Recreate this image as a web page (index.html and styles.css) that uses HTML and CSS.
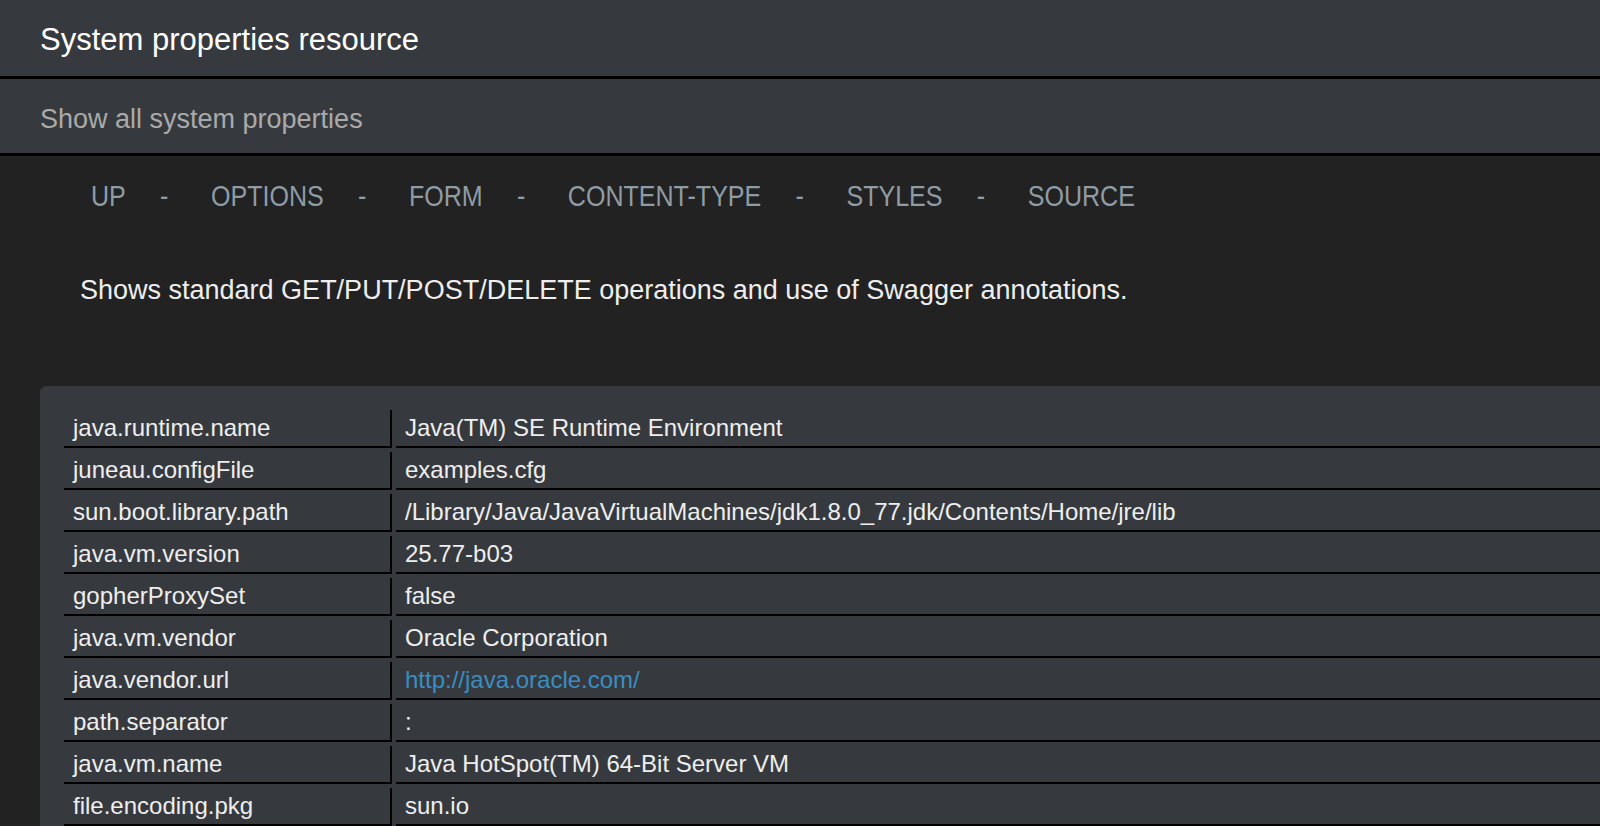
FILE: index.html
```html
<!DOCTYPE html>
<html>
<head>
<meta charset="utf-8">
<title>System properties resource</title>
<link rel="stylesheet" href="styles.css">
</head>
<body>
<header class="title-bar">
  <h1 class="title">System properties resource</h1>
</header>
<header class="subtitle-bar">
  <h2 class="subtitle">Show all system properties</h2>
</header>
<nav class="nav">
  <a class="nav-link" href="#">UP</a><span class="nav-sep">-</span>
  <a class="nav-link" href="#">OPTIONS</a><span class="nav-sep">-</span>
  <a class="nav-link" href="#">FORM</a><span class="nav-sep">-</span>
  <a class="nav-link" href="#">CONTENT-TYPE</a><span class="nav-sep">-</span>
  <a class="nav-link" href="#">STYLES</a><span class="nav-sep">-</span>
  <a class="nav-link" href="#">SOURCE</a>
</nav>
<p class="description">Shows standard GET/PUT/POST/DELETE operations and use of Swagger annotations.</p>
<section class="data-box">
  <table class="props">
    <tbody>
      <tr><td class="key">java.runtime.name</td><td class="val">Java(TM) SE Runtime Environment</td></tr>
      <tr><td class="key">juneau.configFile</td><td class="val">examples.cfg</td></tr>
      <tr><td class="key">sun.boot.library.path</td><td class="val">/Library/Java/JavaVirtualMachines/jdk1.8.0_77.jdk/Contents/Home/jre/lib</td></tr>
      <tr><td class="key">java.vm.version</td><td class="val">25.77-b03</td></tr>
      <tr><td class="key">gopherProxySet</td><td class="val">false</td></tr>
      <tr><td class="key">java.vm.vendor</td><td class="val">Oracle Corporation</td></tr>
      <tr><td class="key">java.vendor.url</td><td class="val"><a class="link" href="#">http://java.oracle.com/</a></td></tr>
      <tr><td class="key">path.separator</td><td class="val">:</td></tr>
      <tr><td class="key">java.vm.name</td><td class="val">Java HotSpot(TM) 64-Bit Server VM</td></tr>
      <tr><td class="key">file.encoding.pkg</td><td class="val">sun.io</td></tr>
    </tbody>
  </table>
</section>
</body>
</html>
```

FILE: styles.css
```css
html, body {
  margin: 0;
  padding: 0;
}
body {
  background: #222222;
  font-family: "Liberation Sans", Arial, sans-serif;
  color: #eeeeee;
  overflow: hidden;
  height: 826px;
}
.title-bar {
  background: #363a3e;
  border-bottom: 3px solid #000;
}
.title {
  margin: 0;
  padding: 25px 40px 21px 40px;
  font-size: 31px;
  line-height: 30px;
  font-weight: normal;
  color: #ffffff;
}
.subtitle-bar {
  background: #363a3e;
  border-bottom: 3px solid #000;
}
.subtitle {
  margin: 0;
  padding: 25px 40px 19px 40px;
  font-size: 27px;
  line-height: 30px;
  font-weight: normal;
  color: #aaaaaa;
}
.nav {
  display: flex;
  gap: 46px;
  padding: 23px 0 0 91px;
  font-size: 30px;
  line-height: 34px;
  color: #8e9ca6;
  transform: scaleX(0.835);
  transform-origin: 91px 0;
}
.nav-link {
  color: #8e9ca6;
  text-decoration: none;
}
.nav-sep {
  color: #8e9ca6;
  margin: 0 5px 0 -5px;
}
.description {
  margin: 62px 0 0 0;
  padding-left: 80px;
  font-size: 27px;
  line-height: 30px;
  color: #eeeeee;
}
.data-box {
  margin: 81px -200px 0 40px;
  padding: 20px;
  background: #363a3e;
  border-radius: 6px;
}
.props {
  width: 100%;
  border-collapse: separate;
  border-spacing: 4px;
}
.props td {
  padding: 4px 9px;
  font-size: 24px;
  line-height: 28px;
  color: #eeeeee;
  border-right: 2px solid #000;
  border-bottom: 2px solid #000;
  white-space: nowrap;
  text-align: left;
  vertical-align: top;
}
.props td.key {
  width: 308px;
}
.link {
  color: #3a8dc0;
  text-decoration: none;
}
```
